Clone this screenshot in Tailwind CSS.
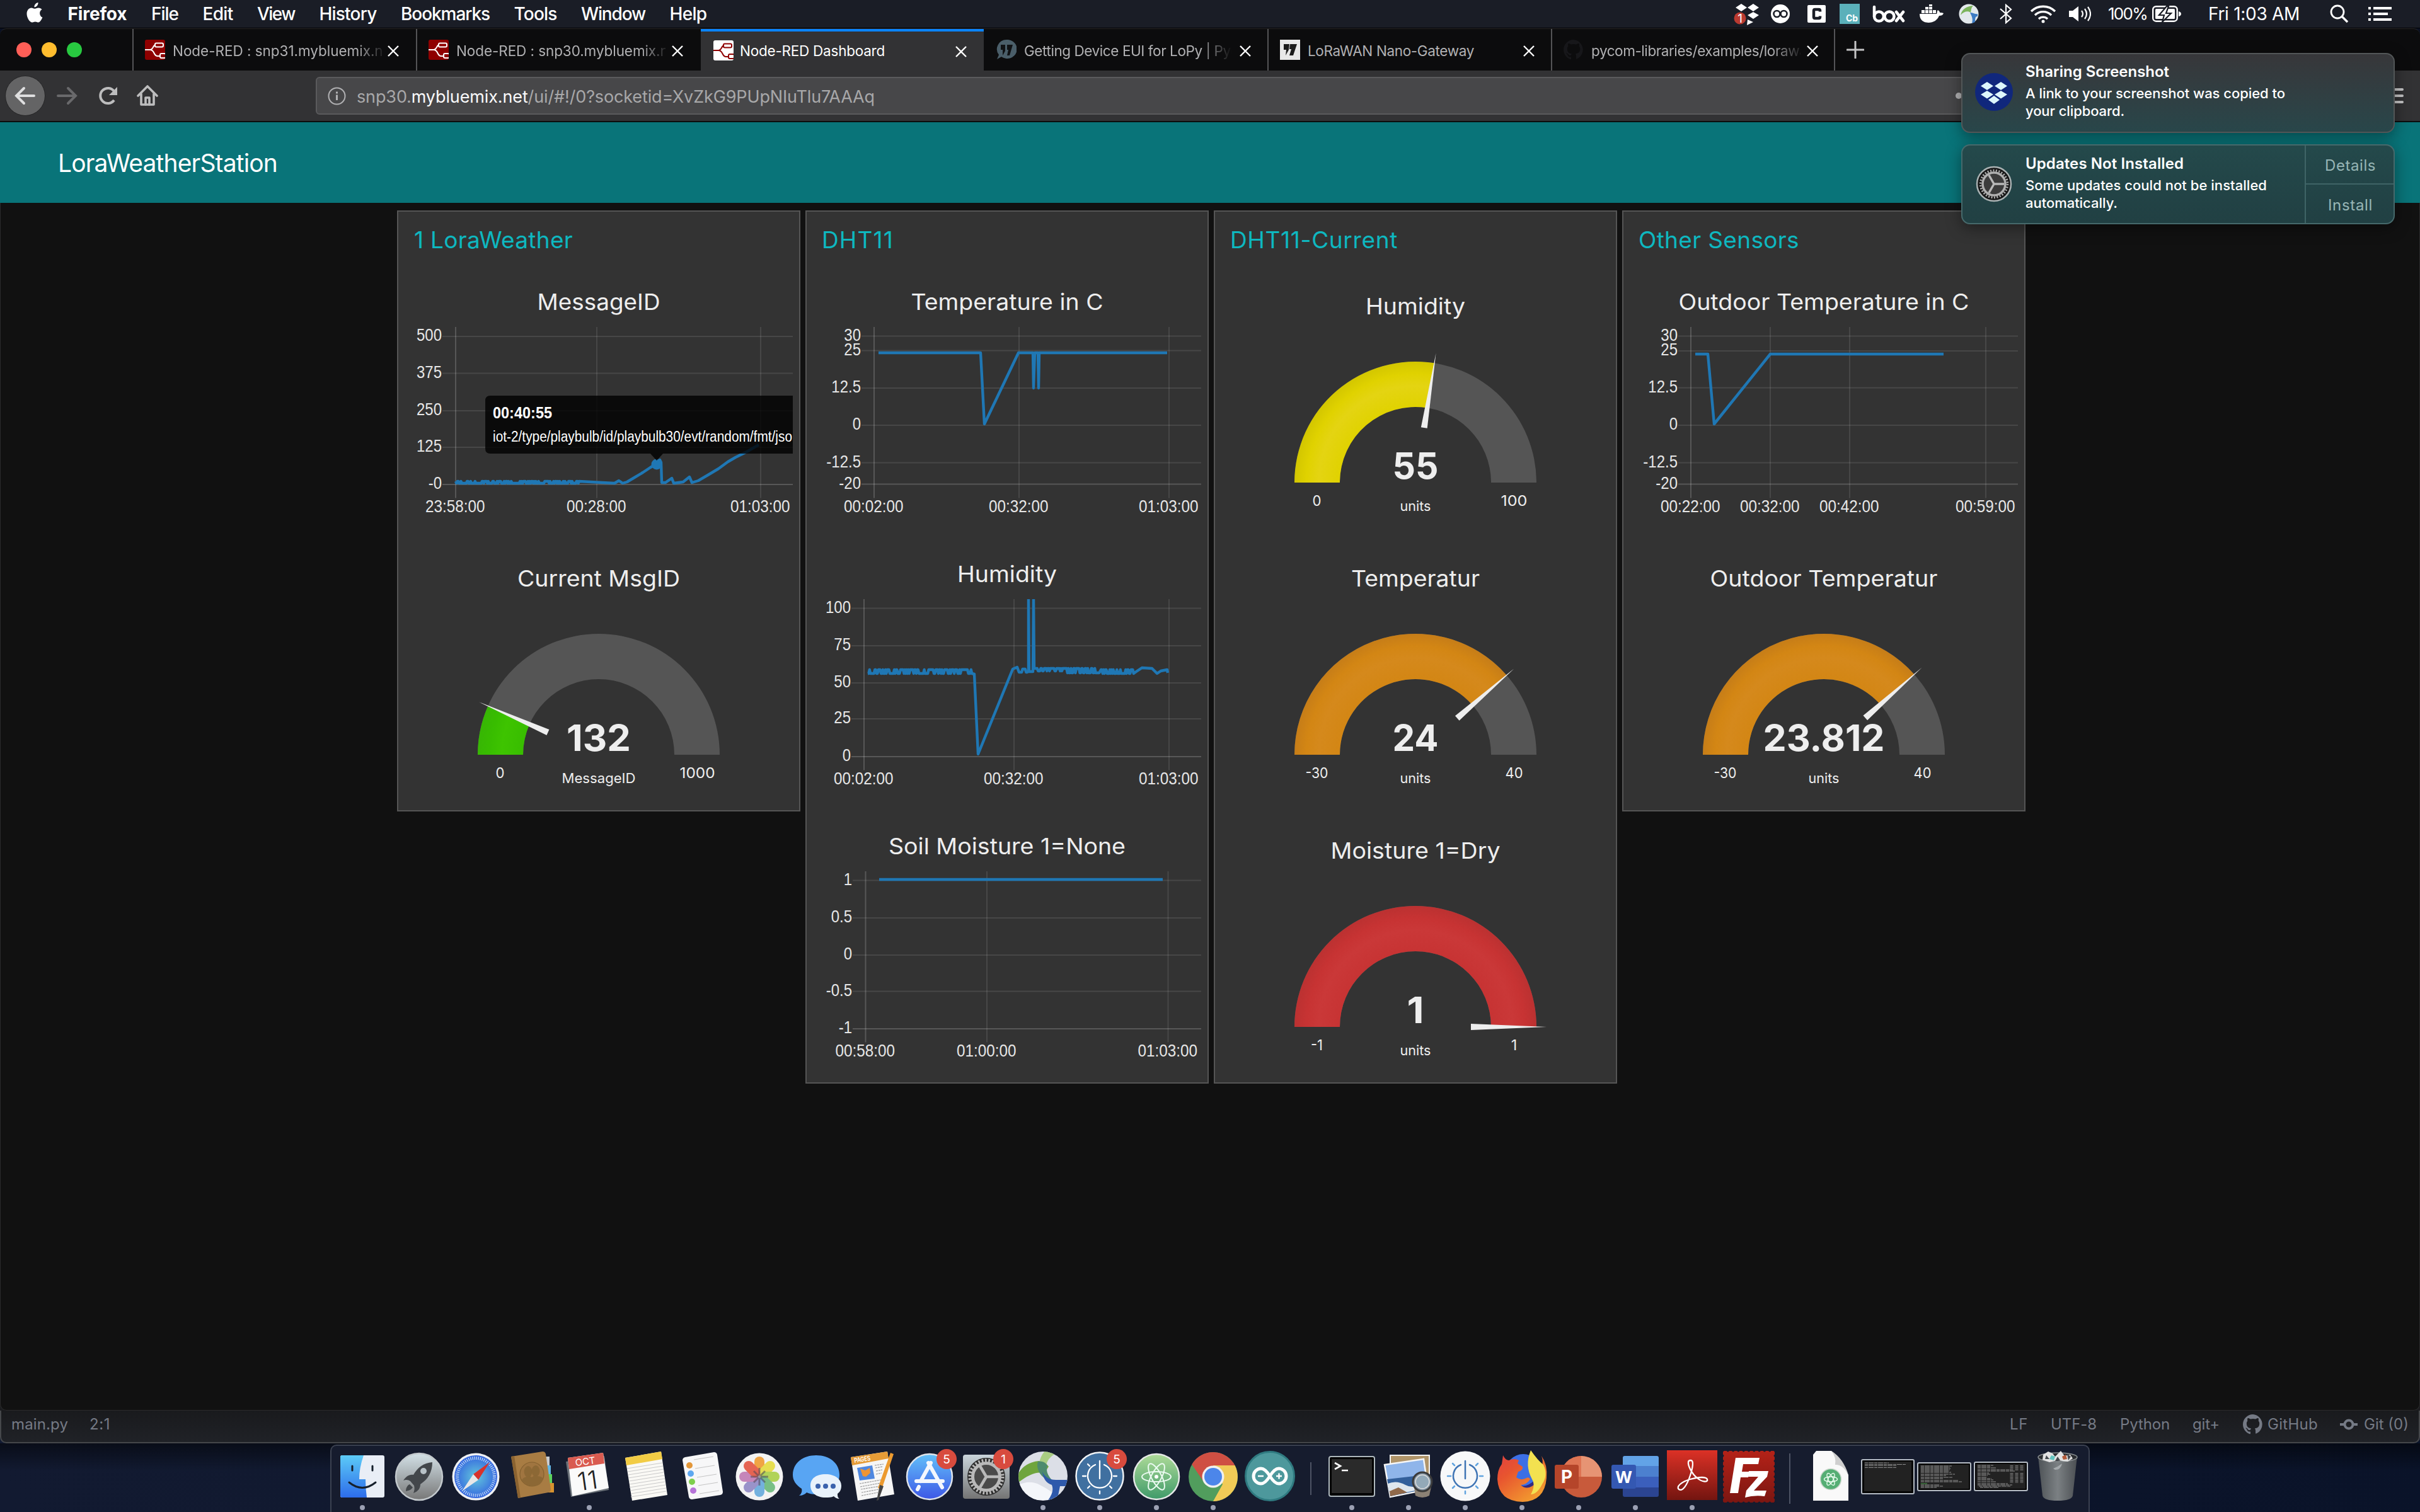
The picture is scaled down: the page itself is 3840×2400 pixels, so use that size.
<!DOCTYPE html>
<html lang="en">
<head>
<meta charset="utf-8">
<title>Node-RED Dashboard</title>
<script src="https://cdn.jsdelivr.net/npm/@tailwindcss/browser@4"></script>
</head>
<body class="w-[3840px] h-[2400px] overflow-hidden bg-[#0a1022] font-['Inter',sans-serif] text-white flex flex-col relative">

<!-- Shared icons -->
<svg class="hidden">
  <symbol id="close" viewBox="0 0 18 18"><path d="M1 1l16 16M17 1L1 17" stroke="#fff" stroke-width="2.400"/></symbol>
  <symbol id="flow" viewBox="0 0 32 32"><g fill="none" stroke="currentColor" stroke-width="2"><path d="M0 16h8c5 0 5-8 9-8M8 16c8 0 5 10 12 10h4"/><rect x="16" y="5.500" width="13" height="6" rx="2"/><rect x="24" y="22" width="9" height="7" rx="2"/></g></symbol>
  <symbol id="github" viewBox="0 0 16 16"><path fill="currentColor" d="M8 0C3.580 0 0 3.580 0 8c0 3.540 2.290 6.530 5.470 7.590.4.070.55-.17.55-.38v-1.500c-2 .4-2.500-.9-2.700-1.300-.1-.2-.5-.9-.8-1.100-.3-.2-.7-.5 0-.5.600 0 1.100.6 1.200.8.700 1.200 1.900.9 2.300.7.100-.5.300-.9.500-1.100-1.800-.2-3.600-.9-3.600-3.900 0-.9.300-1.600.8-2.200-.1-.2-.4-1 .1-2.100 0 0 .7-.2 2.200.8a7.600 7.600 0 0 1 4 0c1.500-1 2.200-.8 2.200-.8.400 1.100.2 1.900.1 2.100.5.600.8 1.300.8 2.200 0 3-1.900 3.700-3.700 3.900.3.300.6.700.6 1.500v2.200c0 .2.100.5.500.4A8 8 0 0 0 8 0z"/></symbol>
</svg>

<!-- Menu bar -->
<header class="h-[45px] shrink-0 bg-[#1a1d26] border-b border-black flex items-center justify-between text-[28px] whitespace-nowrap leading-none">
  <nav class="flex items-center gap-[38.5px] pl-[41px] font-medium">
    <svg class="w-[28px] h-[34px] -mt-1" viewBox="0 0 28 34" fill="#fff"><path d="M19.500 1c.2 2-.5 3.800-1.700 5.200-1.200 1.400-2.900 2.300-4.400 2.100-.2-1.900.6-3.700 1.700-4.900C16.300 2 18.100 1.100 19.500 1zM25.500 12c-3 1.800-3.900 5-3.100 7.900.6 2.300 2 3.800 4 4.700-1.300 3.400-3.900 7.900-6.500 8-1.900 0-2.600-1.200-5-1.200s-3.100 1.200-5 1.200C6.500 32.700 1.500 25.500 1.500 18.800 1.500 13 5.100 9.500 8.800 9.400c2.100 0 4 1.400 5.300 1.400 1.200 0 3.400-1.500 6.200-1.400 2.100.1 4 1 5.200 2.600z"/></svg>
    <span class="font-bold" data-w="94">Firefox</span>
    <span data-w="43">File</span><span data-w="48">Edit</span><span data-w="60">View</span><span data-w="91">History</span><span data-w="141">Bookmarks</span><span data-w="68">Tools</span><span data-w="102">Window</span><span data-w="59">Help</span>
  </nav>
  <div class="flex items-center pr-[45px]">
    <svg class="w-[42px] h-[36px]" viewBox="0 0 42 36" fill="#fff"><path d="M12 2l9 6-9 6-9-6zM31 2l9 6-9 6-9-6zM31 15l9 5-9 6-9-6zM22 27l9 4-10 5z"/><circle cx="10" cy="25" r="9.500" fill="#b93a30"/><text x="10" y="32" font-size="19" text-anchor="middle" fill="#fff">1</text></svg>
    <svg class="w-[30px] h-[30px] ml-[17px]" viewBox="0 0 30 30"><circle cx="15" cy="15" r="15" fill="#fff"/><g fill="none" stroke="#1a1d26" stroke-width="2.600"><circle cx="9.500" cy="15" r="5"/><circle cx="20.500" cy="15" r="5"/></g></svg>
    <svg class="w-[29px] h-[28px] ml-[28px]" viewBox="0 0 29 28"><rect width="29" height="28" rx="2" fill="#fff"/><path d="M20 10.500V9q0-2-2-2h-6q-2 0-2 2v10q0 2 2 2h6q2 0 2-2v-1.500" fill="none" stroke="#1a1d26" stroke-width="4.500"/></svg>
    <svg class="w-[32px] h-[32px] ml-[22px]" viewBox="0 0 32 32"><rect width="32" height="32" fill="#5bb0ba"/><text x="10" y="28" font-size="14" font-weight="700" fill="#fff">Cb</text></svg>
    <svg class="w-[52px] h-[30px] ml-[20px]" viewBox="0 0 52 30" fill="none" stroke="#fff" stroke-width="4.500" stroke-linecap="round"><path d="M3 4v15"/><circle cx="10.500" cy="19" r="7.500"/><circle cx="27" cy="19" r="7.500"/><path d="M38 12l11 14M49 12L38 26"/></svg>
    <svg class="w-[38px] h-[30px] ml-[23px]" viewBox="0 0 38 30" fill="#fff"><path d="M0 15h27c1-1 0-4 2-6 2 1 3 3 3 4 2 0 4 0 6 1-1 3-4 4-7 4-3 7-9 11-17 11S0 25 0 15z"/><g><path d="M3 9h5v5H3zM9 9h5v5H9zM15 9h5v5h-5zM21 9h5v5h-5zM9 4h5v4H9zM15 4h5v4h-5zM15 0h5v3h-5z"/></g></svg>
    <svg class="w-[32px] h-[32px] ml-[24px]" viewBox="0 0 32 32"><circle cx="16" cy="16" r="15.500" fill="#e3e9ec"/><path d="M3 18C5 9 12 4 23 3c-4 4-3 8-4 11-4-3-11-2-16 4z" fill="#7cb45c"/><path d="M18 14c5 0 7 3 12 2v4c-3 0-4 1-4 9l-5 2c2-7 0-11-3-17z" fill="#3d7cc4"/></svg>
    <svg class="w-[20px] h-[32px] ml-[33px]" viewBox="0 0 20 32" fill="none" stroke="#fff" stroke-width="2.200"><path d="M1 8l17 15-8 7V2l8 7L1 24"/></svg>
    <svg class="w-[42px] h-[30px] ml-[28px]" viewBox="0 0 42 30" fill="none" stroke="#fff" stroke-width="3.400"><path d="M2 11a27 27 0 0 1 38 0M8 17a18.500 18.500 0 0 1 26 0M14 23a10 10 0 0 1 14 0"/><circle cx="21" cy="27" r="2.500" fill="#fff" stroke="none"/></svg>
    <svg class="w-[35px] h-[28px] ml-[20px]" viewBox="0 0 35 28"><path d="M0 9h6l9-7v24l-9-7H0z" fill="#fff"/><path d="M20 9q4 5 0 10M25 6q6 8 0 16M30 3q8 11 0 22" fill="none" stroke="#fff" stroke-width="2.200"/></svg>
    <span class="ml-[27px] text-[26px]" data-w="62">100%</span>
    <svg class="w-[46px] h-[26px] ml-[8px]" viewBox="0 0 46 26"><rect x="1.200" y="1.200" width="38.500" height="23.500" rx="5" fill="none" stroke="#fff" stroke-width="2.400"/><rect x="5" y="5" width="31" height="16" rx="1.500" fill="#fff"/><path d="M23 1L11 15h8l-3 11 14-14h-8l4-11z" fill="#fff" stroke="#1a1d26" stroke-width="2.200"/><path d="M42 9v8q4-1 4-4t-4-4z" fill="#fff"/></svg>
    <span class="ml-[43px]" data-w="145">Fri 1:03 AM</span>
    <svg class="w-[30px] h-[30px] ml-[48px]" viewBox="0 0 30 30" fill="none" stroke="#fff" stroke-width="2.800"><circle cx="12" cy="12" r="10"/><path d="M19 19l9 9" stroke-width="3.400"/></svg>
    <svg class="w-[37px] h-[22px] ml-[31px]" viewBox="0 0 37 22" fill="#fff"><path d="M0 0h4v4H0zM8 0h29v4H8zM0 9h4v4H0zM8 9h23v4H8zM0 18h4v4H0zM8 18h29v4H8z"/></svg>
  </div>
</header>

<!-- Tab strip -->
<div class="h-[67px] shrink-0 bg-[#0c0c0d] border-t border-[#2a2a2c] rounded-t-[10px] flex text-[22.500px] text-[#b1b1b3] whitespace-nowrap leading-none">
  <div class="w-[210px] flex items-center gap-4 pl-[26px]">
    <i class="size-6 rounded-full bg-[#ff5f57]"></i><i class="size-6 rounded-full bg-[#ffbd2e]"></i><i class="size-6 rounded-full bg-[#28c940]"></i>
  </div>
  <div class="w-[450px] border-l-2 border-[#545456] flex items-center pl-[18px]">
    <svg class="size-8 shrink-0 bg-[#8f0000] text-white rounded-[3px]"><use href="#flow"/></svg>
    <div class="ml-3 mt-1 w-[332px] shrink-0 overflow-hidden py-1 [mask-image:linear-gradient(90deg,#000_88%,transparent_102%)]"><span data-w="354">Node-RED : snp31.mybluemix.net</span></div>
    <svg class="ml-[9px] size-[18px] mt-1"><use href="#close"/></svg>
  </div>
  <div class="w-[452px] border-l-2 border-[#545456] flex items-center pl-[18px]">
    <svg class="size-8 shrink-0 bg-[#8f0000] text-white rounded-[3px]"><use href="#flow"/></svg>
    <div class="ml-3 mt-1 w-[332px] shrink-0 overflow-hidden py-1 [mask-image:linear-gradient(90deg,#000_88%,transparent_102%)]"><span data-w="357">Node-RED : snp30.mybluemix.net</span></div>
    <svg class="ml-[10px] size-[18px] mt-1"><use href="#close"/></svg>
  </div>
  <div class="w-[449px] bg-[#323234] border-t-4 border-[#0a84ff] flex items-center pl-[20px] text-white pb-[3px]">
    <svg class="size-8 shrink-0 bg-white text-[#8f0000] rounded-[3px]"><use href="#flow"/></svg>
    <div class="ml-[10px] mt-1 w-[330px] shrink-0 py-1"><span data-w="230">Node-RED Dashboard</span></div>
    <svg class="ml-[12px] size-[18px] mt-1"><use href="#close"/></svg>
  </div>
  <div class="w-[450px] flex items-center pl-[20px]">
    <svg class="size-8 shrink-0" viewBox="0 0 32 32"><path d="M16 0a15.500 15 0 1 1-8 27l-7 4 3-7A15.500 15 0 0 1 16 0z" fill="#4a5e69"/><path d="M7 8h7v10l-4 7v-9H7zM17 8h9l-5 17h-4l2-9h-2z" fill="#101214"/></svg>
    <div class="ml-3 mt-1 w-[330px] shrink-0 overflow-hidden py-1 [mask-image:linear-gradient(90deg,#000_85%,transparent)]"><span data-w="372">Getting Device EUI for LoPy | Pycom</span></div>
    <svg class="ml-[12px] size-[18px] mt-1"><use href="#close"/></svg>
  </div>
  <div class="w-[450px] border-l-2 border-[#545456] flex items-center pl-[18px]">
    <svg class="size-8 shrink-0" viewBox="0 0 32 32"><path d="M0 0h32v32H0z" fill="#e8e8e8"/><path d="M6 7h9l-1 9-5 9 1-9H6zM16 7h11l-6 18h-6l3-10h-3z" fill="#1c1c1c"/></svg>
    <div class="ml-3 mt-1 w-[330px] shrink-0 py-1"><span data-w="264">LoRaWAN Nano-Gateway</span></div>
    <svg class="ml-[12px] size-[18px] mt-1"><use href="#close"/></svg>
  </div>
  <div class="w-[451px] border-l-2 border-r-2 border-[#545456] flex items-center pl-[18px]">
    <svg class="size-8 shrink-0 text-[#17171a]"><use href="#github"/></svg>
    <div class="ml-3 mt-1 w-[332px] shrink-0 overflow-hidden py-1 [mask-image:linear-gradient(90deg,#000_86%,transparent_102%)]"><span data-w="378">pycom-libraries/examples/lorawan-n</span></div>
    <svg class="ml-[10px] size-[18px] mt-1"><use href="#close"/></svg>
  </div>
  <div class="flex items-center pl-[18px]"><svg class="size-[28px]" viewBox="0 0 28 28" stroke="#c4c4c5" stroke-width="3" stroke-linecap="round"><path d="M14 1v26M1 14h26"/></svg></div>
</div>

<!-- Navigation toolbar -->
<div class="h-[82px] shrink-0 bg-[#323234] border-b-2 border-[#0c0c0d] flex items-center pl-[8px] pr-[26px] leading-none">
  <div class="size-16 rounded-full bg-[#646465] border border-[#252526] flex items-center justify-center"><svg class="w-[34px] h-[30px]" viewBox="0 0 34 30" fill="none" stroke="#dededf" stroke-width="4" stroke-linecap="round"><path d="M31 15H4M15 3L3 15l12 12"/></svg></div>
  <svg class="w-[34px] h-[30px] ml-[17px]" viewBox="0 0 34 30" fill="none" stroke="#69696b" stroke-width="4" stroke-linecap="round"><path d="M3 15h27M19 3l12 12-12 12"/></svg>
  <svg class="size-[32px] ml-[32px]" viewBox="0 0 32 32"><path d="M26 23A12 12 0 1 1 26 9" fill="none" stroke="#bdbdbe" stroke-width="4"/><path d="M31 2v13H18z" fill="#bdbdbe"/></svg>
  <svg class="w-[34px] h-[34px] ml-[30px]" viewBox="0 0 34 34" fill="none" stroke="#bdbdbe" stroke-width="3.600" stroke-linejoin="round" stroke-linecap="round"><path d="M2 17L17 2l15 15M7 14v17h20V14"/><path d="M14 31V20h6v11" /></svg>
  <div class="ml-[250px] flex-1 h-[60px] bg-[#474749] border-2 border-[#5a5a5c] rounded-[6px] flex items-center pl-[17px] text-[27px] text-[#a8a8a9] whitespace-nowrap">
    <svg class="size-[29px]" viewBox="0 0 29 29" fill="none" stroke="#b1b1b3" stroke-width="2"><circle cx="14.500" cy="14.500" r="13"/><path d="M14.500 12.500V21M14.500 7.500v3" stroke-width="3"/></svg>
    <span class="ml-[17px] pt-[2px]" data-w="822">snp30.<b class="font-normal text-[#f9f9fa]">mybluemix.net</b>/ui/#!/0?socketid=XvZkG9PUpNIuTlu7AAAq</span>
    <i class="ml-[1715px] size-[10px] shrink-0 rounded-full bg-[#b1b1b3]"></i>
  </div>
  <svg class="ml-[20px] w-[36px] h-[24px]" viewBox="0 0 36 24" stroke="#c4c4c5" stroke-width="4" stroke-linecap="round"><path d="M2 2h32M2 12h32M2 22h32"/></svg>
</div>

<!-- Dashboard -->
<div class="h-[128px] shrink-0 bg-[#097479] flex items-center px-[92px] text-[39px] leading-none whitespace-nowrap"><span data-w="348">LoraWeatherStation</span></div>
<div class="flex-1 flex bg-[#1b1c1f]">
<main class="flex-1 bg-[#111] flex items-start justify-center gap-2 pt-3 border-b border-x border-[#2b2b2c] rounded-b-[10px] whitespace-nowrap">
  <section class="w-[640px] bg-[#333] border-2 border-[#555] pb-1 ml-1">
    <h2 class="h-[82px] pl-[25px] pt-[6px] flex items-center text-[37px] text-[#0eb8c0] leading-none"><span data-w="252">1 LoraWeather</span></h2>
    <div data-chart="messageId"></div><div data-gauge="messageId"></div>
  </section>
  <section class="w-[640px] bg-[#333] border-2 border-[#555] pb-1">
    <h2 class="h-[82px] pl-[24px] pt-[6px] flex items-center text-[37px] text-[#0eb8c0] leading-none"><span data-w="114">DHT11</span></h2>
    <div data-chart="temperature"></div><div data-chart="humidity"></div><div data-chart="soil"></div>
  </section>
  <section class="w-[640px] bg-[#333] border-2 border-[#555] pb-1">
    <h2 class="h-[82px] pl-[24px] pt-[6px] flex items-center text-[37px] text-[#0eb8c0] leading-none"><span data-w="266">DHT11-Current</span></h2>
    <div data-gauge="humidity"></div><div data-gauge="temperature"></div><div data-gauge="moisture"></div>
  </section>
  <section class="w-[640px] bg-[#333] border-2 border-[#555] pb-1">
    <h2 class="h-[82px] pl-[24px] pt-[6px] flex items-center text-[37px] text-[#0eb8c0] leading-none"><span data-w="255">Other Sensors</span></h2>
    <div data-chart="outdoor"></div><div data-gauge="outdoor"></div>
  </section>
</main>
</div>

<!-- Editor status bar and dock, over the desktop wallpaper -->
<div class="shrink-0 bg-linear-to-r from-[#121a31] via-[#0e172d] to-[#0a1329]">
<div class="h-[52px] bg-linear-to-b from-[#191a1d] to-[#202227] border-b-2 border-x-2 border-[#45474a] rounded-b-[10px] flex items-center pb-[6px] pl-[16px] pr-[16px] text-[24px] text-[#757a85] leading-none whitespace-nowrap">
  <span data-w="90">main.py</span><span class="ml-[34px]" data-w="33">2:1</span>
  <div class="ml-auto flex items-center">
    <span data-w="29">LF</span><span class="ml-[36px]" data-w="73">UTF-8</span><span class="ml-[37px]" data-w="79">Python</span><span class="ml-[36px]" data-w="43">git+</span>
    <svg class="ml-[37px] size-[32px]"><use href="#github"/></svg>
    <span class="ml-[7px]" data-w="80">GitHub</span>
    <svg class="ml-[35px] w-[28px] h-[18px]" viewBox="0 0 28 18" fill="none" stroke="#757a85" stroke-width="4"><circle cx="14" cy="9" r="6.500"/><path d="M0 9h7M21 9h7"/></svg>
    <span class="ml-[10px]" data-w="71">Git (0)</span>
  </div>
</div>
<footer class="h-[109px] flex justify-center pt-[2px] bg-linear-to-b from-black/50 to-transparent to-40%">
  <div class="w-[2792px] h-full bg-[#161c2e] border-2 border-b-0 border-[#3b4150] rounded-t-[10px] flex pl-[4px]">
    <svg class="w-[90px] h-[105px] shrink-0" viewBox="0 0 90 105"><defs><linearGradient id="fb" x2="0" y2="1"><stop stop-color="#5ccbf7"/><stop offset="1" stop-color="#2d6cea"/></linearGradient></defs><rect x="10" y="15" width="70" height="67" rx="3" fill="#e9eef6"/><path d="M13 15h34q-7 20-7 38h10q0 15 2 29H13q-3 0-3-3V18q0-3 3-3z" fill="url(#fb)"/><path d="M29 32v7M61 32v7M24 58q21 17 42 0" fill="none" stroke="#16202c" stroke-width="3" stroke-linecap="round"/><circle cx="45" cy="98" r="4" fill="#9ba0b3"/></svg>
    <svg class="w-[90px] h-[105px] shrink-0" viewBox="0 0 90 105"><defs><linearGradient id="lp" x2="0" y2="1"><stop stop-color="#d3e1e7"/><stop offset="1" stop-color="#777"/></linearGradient></defs><circle cx="45" cy="49" r="37" fill="url(#lp)" stroke="#c3c9cd" stroke-width="2.500"/><path d="M66 26c-14 1-24 9-30 20-7-1-12 3-16 9 5-2 8-1 11 1l6 7c1 4 1 7-1 12 8-3 11-8 11-14 12-8 19-19 19-35z" fill="#43474b"/><circle cx="52" cy="40" r="5" fill="#b8c2c7"/><path d="M30 61c-4 2-6 6-6 11 6-1 9-3 11-6" fill="#43474b"/></svg>
    <svg class="w-[90px] h-[105px] shrink-0" viewBox="0 0 90 105"><defs><radialGradient id="sf"><stop stop-color="#63c7dc"/><stop offset="1" stop-color="#3567df"/></radialGradient></defs><circle cx="45" cy="49" r="37.500" fill="#eef0f3"/><circle cx="45" cy="49" r="34" fill="url(#sf)"/><circle cx="45" cy="49" r="29.500" fill="none" stroke="#cfe3fa" stroke-width="5" stroke-dasharray="1.100 2"/><path d="M67 26L49 54l-8-9z" fill="#d8322b"/><path d="M23 72l18-27 8 9z" fill="#e8e8e8"/></svg>
    <svg class="w-[90px] h-[105px] shrink-0" viewBox="0 0 90 105"><path d="M66 17h6v14h-6z" fill="#c9ccd0"/><path d="M66 31h8v14h-8z" fill="#62b7e6"/><path d="M68 45h8v14h-8z" fill="#5dd35e"/><path d="M70 59h9v15h-9z" fill="#d7922f"/><path d="M11 17l50-8q4 0 5 4l8 56q0 4-4 5l-48 9z" fill="#a87c43"/><path d="M11 17l5-1 10 66-4 1z" fill="#8a6230"/><ellipse cx="44" cy="45" rx="19" ry="19" fill="#a07540" stroke="#83602f" stroke-width="1.200"/><g fill="#8c6835"><ellipse cx="38" cy="41" rx="6.500" ry="9"/><ellipse cx="50" cy="40" rx="6.500" ry="9"/><path d="M28 54q3-5 10-5 3-2 6 1 3-4 8-2 7 0 10 4-3 11-14 12-14 0-20-10z"/></g></svg>
    <svg class="w-[90px] h-[105px] shrink-0" viewBox="0 0 90 105"><path d="M8 25l8 56 60-11-7-54z" fill="#6a7178"/><path d="M11 19l56-8 9 56-58 13z" fill="#fafafa"/><path d="M11 19l56-8 2 17-56 9z" fill="#d95b50"/><text transform="rotate(-8 40 28)" x="39" y="30" font-size="15" text-anchor="middle" fill="#fff">OCT</text><text transform="rotate(-8 45 60)" x="43" y="69" font-size="40" font-weight="300" text-anchor="middle" fill="#222" textLength="32">11</text><circle cx="45" cy="98" r="4" fill="#9ba0b3"/></svg>
    <svg class="w-[90px] h-[105px] shrink-0" viewBox="0 0 90 105"><path d="M12 19l57-10 10 69-56 9z" fill="#faf9f5"/><path d="M12 19l57-10 2 12-57 10z" fill="#f2cc45"/><g stroke="#c9c9c9" stroke-width="1"><path d="M15 36l56-9M16 41l56-9M17 46l56-9M17 51l56-9M18 56l56-9M19 61l56-9M19 66l56-9M20 71l56-9M21 76l56-9M21 81l56-9"/></g></svg>
    <svg class="w-[90px] h-[105px] shrink-0" viewBox="0 0 90 105"><path d="M17 18l46-8q4 0 5 4l9 59q0 4-4 5l-45 7q-4 0-5-4l-10-58q0-4 4-5z" fill="#f7f7f8"/><g stroke="#c4c4c4"><path d="M31 22l31-5M33 36l31-5M36 50l31-5M38 63l31-5M40 76l31-5"/></g><circle cx="24" cy="31" r="5" fill="#e3973a"/><circle cx="26" cy="44" r="5" fill="#5ea8f0"/><circle cx="28" cy="57" r="5" fill="#7ecf4d"/><circle cx="30" cy="71" r="5" fill="#b673d8"/></svg>
    <svg class="w-[90px] h-[105px] shrink-0" viewBox="0 0 90 105"><circle cx="45" cy="49" r="37.500" fill="#f3f3f3"/><g transform="translate(45 49)" opacity=".88"><rect x="-8" y="-32" width="16" height="30" rx="8" fill="#f09a2c"/><rect x="-8" y="-32" width="16" height="30" rx="8" fill="#e5dc3b" transform="rotate(45)"/><rect x="-8" y="-32" width="16" height="30" rx="8" fill="#a9cf44" transform="rotate(90)"/><rect x="-8" y="-32" width="16" height="30" rx="8" fill="#68b878" transform="rotate(135)"/><rect x="-8" y="-32" width="16" height="30" rx="8" fill="#62a8dc" transform="rotate(180)"/><rect x="-8" y="-32" width="16" height="30" rx="8" fill="#8d86c4" transform="rotate(225)"/><rect x="-8" y="-32" width="16" height="30" rx="8" fill="#bf78b3" transform="rotate(270)"/><rect x="-8" y="-32" width="16" height="30" rx="8" fill="#e4513d" transform="rotate(315)"/><g stroke="#3a3040" stroke-width="3" opacity=".55"><path d="M0-14V14M-14 0H14M-9-9L9 9M9-9L-9 9"/></g></g></svg>
    <svg class="w-[90px] h-[105px] shrink-0" viewBox="0 0 90 105"><path d="M45 15c22 0 37 13 37 31S67 77 45 77c-6 0-11-1-15-3-4 4-8 5-12 5 4-3 5-7 4-11C13 62 8 55 8 46c0-18 15-31 37-31z" fill="#58a5f3"/><path d="M60 45c15 0 25 8 25 18 0 6-2 10-6 13 0 3 0 6 3 8-4 0-7-2-9-4-4 2-8 2-13 2-15 0-24-8-24-19s9-18 24-18z" fill="#e9f2fb"/><g fill="#3b62ad"><circle cx="48" cy="64" r="4"/><circle cx="60" cy="64" r="4"/><circle cx="72" cy="64" r="4"/></g></svg>
    <svg class="w-[90px] h-[105px] shrink-0" viewBox="0 0 90 105"><path d="M10 18l58-9 11 68-58 10z" fill="#f6f6f6"/><path d="M10 18l58-9 2 11-58 11z" fill="#e69c37"/><text x="16" y="27" font-size="10.500" font-weight="600" fill="#fff" transform="rotate(-9 16 27)" textLength="26" lengthAdjust="spacingAndGlyphs">PAGES</text><path d="M20 35l24-4 4 21-24 3z" fill="#4e87e0"/><path d="M25 36l8 3 7-4 1 8-7 6-5-1z" fill="#ef9535"/><g stroke="#9a9a9a" stroke-width="1.200" stroke-dasharray="3 1"><path d="M48 31l14-2M49 35l12-2M50 40l10-2M50 45l9-2M24 60l34-6M25 65l32-6M26 69l30-5M27 74l28-5M27 79l26-5"/></g><path d="M73 11l5 2-19 56-6-2z" fill="#ec9a2f"/><path d="M56 62l6 2-8 22-3 1z" fill="#444"/></svg>
    <svg class="w-[90px] h-[105px] shrink-0" viewBox="0 0 90 105"><defs><linearGradient id="as" x2="0" y2="1"><stop stop-color="#62c0fa"/><stop offset="1" stop-color="#3d57e6"/></linearGradient></defs><circle cx="45" cy="49" r="36" fill="url(#as)" stroke="#e0e4ea" stroke-width="2.500"/><path d="M43 27l22 39M47 27L31 56M28 65l-2 4M24 56h42" stroke="#f4f7fd" stroke-width="6" stroke-linecap="round"/><circle cx="72" cy="21" r="16" fill="#d84b3e"/><text x="72" y="28" font-size="19" text-anchor="middle" fill="#fff">5</text></svg>
    <svg class="w-[90px] h-[105px] shrink-0" viewBox="0 0 90 105"><defs><linearGradient id="sp" x2="0" y2="1"><stop stop-color="#c9d4db"/><stop offset="1" stop-color="#747474"/></linearGradient></defs><rect x="8" y="14" width="74" height="70" rx="4" fill="url(#sp)"/><circle cx="45" cy="49" r="30" fill="#2e2e2e"/><circle cx="45" cy="49" r="26" fill="none" stroke="#b9b9b9" stroke-width="5" stroke-dasharray="2.700 2.740"/><circle cx="45" cy="49" r="21.500" fill="#4a4a4a" stroke="#b9b9b9" stroke-width="5"/><path d="M45 49h20M45 49L35 32M45 49L35 66" stroke="#b9b9b9" stroke-width="4.500"/><circle cx="72" cy="21" r="16" fill="#d84b3e"/><text x="72" y="28" font-size="19" text-anchor="middle" fill="#fff">1</text></svg>
    <svg class="w-[90px] h-[105px] shrink-0" viewBox="0 0 90 105"><clipPath id="gc"><circle cx="45" cy="48" r="39"/></clipPath><g clip-path="url(#gc)"><path d="M0 0h90v105H0z" fill="#dcdfe7"/><path d="M0 66q20-14 40-4t34 24H0z" fill="#f4f6fa"/><path d="M3 50Q12 27 38 24q10 0 16 9-4 4-4 12Q34 36 6 58z" fill="#6fa53d"/><path d="M52 5l13 7q-14 8-15 20l-11-5Q42 12 52 5z" fill="#a9cd82"/><path d="M37 25q9-2 15 6-4 12 8 24-18-2-23-18-2-6 0-12z" fill="#4d8b6e"/><path d="M44 41q6 14 24 13h18v10H72q-2 12-6 26H50q14-16 9-28-13-4-15-21z" fill="#2e59ab"/></g><circle cx="45" cy="98" r="4" fill="#9ba0b3"/></svg>
    <svg class="w-[90px] h-[105px] shrink-0" viewBox="0 0 90 105"><circle cx="45" cy="48" r="37.500" fill="#4070a0" stroke="#f0f3f6" stroke-width="2.500"/><g fill="none" stroke="#fff" stroke-width="2.300" stroke-linecap="round"><path d="M38 30a19 19 0 1 0 14 0M45 24v28M18 48h5M67 48h5M45 72v4M26 67l3-3M64 67l-3-3M26 29l3 3"/></g><circle cx="72" cy="21" r="16" fill="#d84b3e"/><text x="72" y="28" font-size="19" text-anchor="middle" fill="#fff">5</text><circle cx="45" cy="98" r="4" fill="#9ba0b3"/></svg>
    <svg class="w-[90px] h-[105px] shrink-0" viewBox="0 0 90 105"><defs><linearGradient id="at" x2="0" y2="1"><stop stop-color="#aedb98"/><stop offset="1" stop-color="#3f9a69"/></linearGradient></defs><circle cx="45" cy="49" r="36" fill="url(#at)" stroke="#e6e9e7" stroke-width="2.500"/><g fill="none" stroke="#eafaf0" stroke-width="2" transform="translate(45 49)"><ellipse rx="23" ry="8"/><ellipse rx="23" ry="8" transform="rotate(62)"/><ellipse rx="23" ry="8" transform="rotate(118)"/></g><circle cx="45" cy="49" r="3" fill="#fff"/><circle cx="45" cy="98" r="4" fill="#9ba0b3"/></svg>
    <svg class="w-[90px] h-[105px] shrink-0" viewBox="0 0 90 105"><circle cx="45" cy="49" r="39" fill="#519d5d"/><path d="M45 49L11.200 29.500A39 39 0 0 1 79.500 31z" fill="#cf4f43"/><path d="M11.200 29.500L32 60l13-11V30z" fill="#cf4f43"/><path d="M45 31h34.500A39 39 0 0 1 45 88l15-27z" fill="#f1cb57"/><circle cx="45" cy="49" r="17.500" fill="#f0f0f0"/><circle cx="45" cy="49" r="14" fill="#4c86ea"/><circle cx="45" cy="98" r="4" fill="#9ba0b3"/></svg>
    <svg class="w-[90px] h-[105px] shrink-0" viewBox="0 0 90 105"><circle cx="45" cy="48" r="38.500" fill="#4d989c" stroke="#2f7a80" stroke-width="3"/><g fill="none" stroke="#fff" stroke-width="5"><path d="M45 48c-5-8-9-12-14-12a12 12 0 0 0 0 24c5 0 9-4 14-12s9-12 14-12a12 12 0 0 1 0 24c-5 0-9-4-14-12z"/><path d="M26 48h9M55 48h9M59.500 43.500v9" stroke-width="2.400"/></g></svg>
    <div class="w-[40px] shrink-0 flex justify-center pt-[26px]"><i class="w-[2px] h-[52px] bg-[#4d5364]"></i></div>
    <svg class="w-[90px] h-[105px] shrink-0" viewBox="0 0 90 105"><rect x="9" y="17" width="72" height="63" rx="3" fill="#000" stroke="#aeb8bd" stroke-width="2"/><rect x="13" y="21" width="64" height="54" fill="#2a2a2a"/><path d="M18 27l9 5-9 5M29 39h10" fill="none" stroke="#fff" stroke-width="2.600"/><circle cx="45" cy="98" r="4" fill="#9ba0b3"/></svg>
    <svg class="w-[90px] h-[105px] shrink-0" viewBox="0 0 90 105"><path d="M16 15h62v52H16z" fill="#b0956a" stroke="#f3f3f3" stroke-width="2"/><path d="M7 30l62-9 7 48-60 12z" fill="#8fb5ea" stroke="#f6f6f6" stroke-width="2.500"/><path d="M11 53l61-7 3 22-59 12z" fill="#33609b"/><path d="M12 60q14-6 28 2t34-5l1 10-59 12z" fill="#dfe7ee"/><path d="M15 72l14-6 14 8-27 6z" fill="#90694a"/><path d="M53 60l3 19q11 6 22 0l4-19z" fill="#8b8175"/><circle cx="67" cy="57" r="15" fill="#7f91a0" stroke="#3a3a3a" stroke-width="3"/><circle cx="67" cy="57" r="11" fill="#93a9b8" stroke="#ddd" stroke-width="1.500"/><circle cx="45" cy="98" r="4" fill="#9ba0b3"/></svg>
    <svg class="w-[90px] h-[105px] shrink-0" viewBox="0 0 90 105"><circle cx="45" cy="48" r="39.500" fill="#f7f8f9"/><g fill="none" stroke="#3f74b4" stroke-width="2.500" stroke-linecap="round"><path d="M38 30a19 19 0 1 0 14 0M45 24v28"/><path stroke="#61a4df" d="M17 48h5M68 48h5M45 72v4M25 67l3-3M65 67l-3-3M25 28l3 3M65 28l-3 3"/></g><circle cx="45" cy="98" r="4" fill="#9ba0b3"/></svg>
    <svg class="w-[90px] h-[105px] shrink-0" viewBox="0 0 90 105"><defs><linearGradient id="ff" x2=".8" y2="1"><stop stop-color="#e2413f"/><stop offset=".35" stop-color="#e8552f"/><stop offset="1" stop-color="#f3a32f"/></linearGradient></defs><circle cx="47" cy="41" r="28" fill="#3c6fe6"/><path d="M36 56q10 16 30-2l-2 14H36z" fill="#322a80"/><path d="M15 15q3 7 9 8 9-4 16 0l-2 5 8 5q1 6-7 8l-3 9q6 5 14 2 6-4 8 1-6 9-15 9 8 8 18 2 10-6 7-18 14-14 8-30 10 14 8 35-3 37-38 38Q8 88 6 53q0-15 7-24z" fill="url(#ff)"/><path d="M59 7q11 16 20 23 8 16-2 31-8 16-18 16 8-14 2-24-12-22-2-46z" fill="#f3e150"/><circle cx="45" cy="98" r="4" fill="#9ba0b3"/></svg>
    <svg class="w-[90px] h-[105px] shrink-0" viewBox="0 0 90 105"><circle cx="49" cy="49" r="33" fill="#c85a3b"/><path d="M49 16a33 33 0 0 1 33 33H49z" fill="#e69474"/><path d="M49 16v33H16a33 33 0 0 1 33-33z" fill="#de7453"/><rect x="7" y="30" width="38" height="38" rx="3" fill="#b5452a"/><text x="26" y="59" font-size="28" font-weight="700" text-anchor="middle" fill="#fff">P</text><circle cx="45" cy="98" r="4" fill="#9ba0b3"/></svg>
    <svg class="w-[90px] h-[105px] shrink-0" viewBox="0 0 90 105"><path d="M25 32V19q0-3 3-3h51q3 0 3 3v13z" fill="#62a3e7"/><path d="M25 32h57v17H25z" fill="#4c80cf"/><path d="M25 49h57v17H25z" fill="#3b5fbc"/><path d="M25 66h57v12q0 3-3 3H28q-3 0-3-3z" fill="#2b4491"/><rect x="7" y="30" width="39" height="38" rx="3" fill="#3458b2"/><text x="26.500" y="59" font-size="26" font-weight="700" text-anchor="middle" fill="#fff" textLength="27" lengthAdjust="spacingAndGlyphs">W</text><circle cx="45" cy="98" r="4" fill="#9ba0b3"/></svg>
    <svg class="w-[90px] h-[105px] shrink-0" viewBox="0 0 90 105"><defs><linearGradient id="ac" x2="0" y2="1"><stop stop-color="#dc3126"/><stop offset="1" stop-color="#731510"/></linearGradient></defs><path d="M5 7h80v79H5z" fill="url(#ac)"/><path d="M43 23c5 0 3 12-1 24-5 15-12 26-18 22-5-4 4-12 18-16 15-4 25-4 27 0 2 5-8 5-16-2-8-6-15-20-14-25 0-2 2-3 4-3z" fill="none" stroke="#fff" stroke-width="2.300"/><circle cx="45" cy="98" r="4" fill="#9ba0b3"/></svg>
    <svg class="w-[90px] h-[105px] shrink-0" viewBox="0 0 90 105"><defs><linearGradient id="fz" x2="0" y2="1"><stop stop-color="#b42218"/><stop offset="1" stop-color="#7c1611"/></linearGradient></defs><rect x="4" y="8" width="82" height="82" fill="url(#fz)"/><rect x="3.500" y="7.500" width="83" height="83" fill="none" stroke="#161c2e" stroke-width="4" stroke-linecap="round" stroke-dasharray="0 8.300"/><path d="M24 19h38l-2 10H36l-2 12h12l-2 9H32l-4 25H15z" fill="#fff"/><path d="M45 40h31l-2 9-21 22h20l-3 9q-17-2-31 2l2-11 19-22H44z" fill="#fff"/></svg>
    <div class="w-[40px] shrink-0 flex justify-center pt-[12px]"><i class="w-[2px] h-[80px] bg-[#4d5364]"></i></div>
    <svg class="w-[90px] h-[105px] shrink-0" viewBox="0 0 90 105"><path d="M22 8h24q14 12 27 38v41H17V14z" fill="#f9f9f9"/><path d="M46 8q8 10 6 22 12-1 21 16-8-26-27-38z" fill="#cfcfcf"/><circle cx="45" cy="53" r="16.500" fill="#55ae74" stroke="#cdd8cf" stroke-width="1.500"/><g fill="none" stroke="#f0fff4" stroke-width="1.300" transform="translate(45 53)"><ellipse rx="10.500" ry="4"/><ellipse rx="10.500" ry="4" transform="rotate(62)"/><ellipse rx="10.500" ry="4" transform="rotate(118)"/></g></svg>
    <svg class="w-[90px] h-[105px] shrink-0" viewBox="0 0 90 105"><rect x="4" y="22" width="83" height="54" rx="2" fill="#050505" stroke="#b4bbc4" stroke-width="2"/><rect x="8" y="25" width="75" height="47" fill="#222"/><g stroke="#8a8a8a" stroke-width="1" stroke-dasharray="5 1 8 1"><path d="M9 27h38M9 29.500h65M9 31.500h50M9 34.500h50"/></g></svg>
    <svg class="w-[90px] h-[105px] shrink-0" viewBox="0 0 90 105"><rect x="3" y="27" width="84" height="44" rx="2" fill="#050505" stroke="#b4bbc4" stroke-width="2"/><rect x="6" y="30" width="78" height="38" fill="#222"/><g stroke="#8f8f8f" stroke-width="1" stroke-dasharray="5 1 8 1"><path d="M8 32h49M8 34h46M8 36h47M8 38h46M8 40h44M8 42h48M8 45h54M8 47h40M8 50h50M8 52h35M8 55h60M8 57h65M8 62h30M8 64h35M8 66h25"/></g><path d="M8 60h10" stroke="#4ca54c"/></svg>
    <svg class="w-[90px] h-[105px] shrink-0" viewBox="0 0 90 105"><rect x="3" y="26" width="84" height="45" rx="2" fill="#050505" stroke="#b4bbc4" stroke-width="2"/><rect x="6" y="29" width="78" height="39" fill="#222"/><g stroke="#8f8f8f" stroke-width="1" stroke-dasharray="5 1 8 1"><path d="M8 31h25M8 33h20M8 35h30M8 38h52M8 40h60M8 43h18M8 45h20M8 47h16M8 50h14M8 52h22M8 54h25M8 57h30M8 60h48M8 62h55M10 64h50M12 66h30"/></g><path d="M62 31v8M70 31v8M78 31v8M62 43v16M70 43v16M78 43v16" stroke="#777" stroke-width="5" stroke-dasharray="1.200 1"/></svg>
    <svg class="w-[90px] h-[105px] shrink-0" viewBox="0 0 90 105"><defs><linearGradient id="tr"><stop stop-color="#4e5357"/><stop offset=".5" stop-color="#7b8083"/><stop offset="1" stop-color="#4b4f53"/></linearGradient></defs><path d="M14 16l7 63q2 8 24 8t24-8l7-63z" fill="url(#tr)"/><ellipse cx="45" cy="18" rx="31" ry="7" fill="#2b2e31" stroke="#8b9093" stroke-width="1.500"/><path d="M22 14l8-5 7 3 4 5 9-9 6 8 9-2 4 6-8 5-17-2-12 3-11-4z" fill="#e2e2e2"/><path d="M35 15l6 2-2 6-7-2z" fill="#63c5c0"/><path d="M52 17l6-3 2 7-6 1z" fill="#b25b3b"/><path d="M60 13l6 4-4 6zM27 15l5 6h-7zM45 17l4 6-8 1z" fill="#45494e"/><path d="M38 36q8-3 14-8-2 10-11 10z" fill="#a5aaad"/></svg>
  </div>
</footer>
</div>

<!-- Notifications -->
<aside class="absolute top-[84px] left-[3112px] w-[688px] flex flex-col gap-[18px] whitespace-nowrap text-[22px] font-medium">
  <div class="h-[127px] rounded-[14px] border-2 border-[#525657] bg-gradient-to-b from-[#37373a] to-[#28464a] shadow-[0_6px_24px_rgba(0,0,0,0.4)] flex">
    <svg class="w-[60px] h-[60px] shrink-0 ml-[20px] mt-[30px]" viewBox="0 0 60 60"><circle cx="30" cy="30" r="30" fill="#10277c"/><path d="M19 14l10 6.500L19 27 9 20.500zM41 14l10 6.500L41 27l-10-6.500zM19 28l10 6-10 6.500L9 34zM41 28l10 6-10 6.500L31 34zM30 36l9 6.500-9 6.500-9-6.500z" fill="#ddf6fc"/></svg>
    <div class="ml-[20px] pt-[11px] leading-7"><p class="text-[24px] leading-[34px] mb-[3px] font-semibold"><span data-w="228">Sharing Screenshot</span></p><p><span data-w="412">A link to your screenshot was copied to</span></p><p><span data-w="157">your clipboard.</span></p></div>
  </div>
  <div class="h-[127px] rounded-[14px] border-2 border-[#46696b] bg-gradient-to-b from-[#24494b] to-[#214043] shadow-[0_6px_24px_rgba(0,0,0,0.4)] flex">
    <svg class="w-[60px] h-[60px] shrink-0 ml-[20px] mt-[31px]" viewBox="0 0 60 60"><circle cx="30" cy="30" r="27" fill="#161616" stroke="#a9b1b2" stroke-width="2.500"/><circle cx="30" cy="30" r="21.500" fill="none" stroke="#a8a8a8" stroke-width="3.500" stroke-dasharray="2.200 2.300"/><circle cx="30" cy="30" r="18" fill="#3c3c3c" stroke="#b0b0b0" stroke-width="3.500"/><path d="M30 30h16M30 30l-8-14M30 30l-8 14" stroke="#b8b8b8" stroke-width="3.500"/></svg>
    <div class="ml-[20px] pt-[12px] leading-7"><p class="text-[24px] leading-[34px] mb-[3px] font-semibold"><span data-w="251">Updates Not Installed</span></p><p><span data-w="383">Some updates could not be installed</span></p><p><span data-w="146">automatically.</span></p></div>
    <div class="ml-auto w-[141px] shrink-0 border-l-2 border-[#3f6466] flex flex-col text-[24px] text-[#97b6b6] font-normal leading-none">
      <div class="flex-1 flex items-center justify-center border-b-2 border-[#3f6466] pt-[3px] pl-[2px]"><span data-w="81">Details</span></div>
      <div class="flex-1 flex items-center justify-center pt-[4px] pl-[2px]"><span data-w="71">Install</span></div>
    </div>
  </div>
</aside>

<script>
// Fit labels to their design widths through letter spacing; refit whenever
// a label's box changes (stylesheet or font arriving late).
function fit(el) {
  const target = +el.dataset.w;
  if (Math.abs(el.getBoundingClientRect().width - target) < 0.3) return;
  el.style.letterSpacing = '0px';
  const natural = el.getBoundingClientRect().width;
  el.style.letterSpacing = ((target - natural) / el.textContent.length) + 'px';
}
const labels = document.querySelectorAll('[data-w]');
const watcher = new ResizeObserver(entries => entries.forEach(e => fit(e.target)));
labels.forEach(el => { el.style.display = 'inline-block'; el.style.flexShrink = 0; watcher.observe(el); });
window.addEventListener('load', () => labels.forEach(fit));

const SANS = 'Inter, sans-serif', AXIS = "'Liberation Sans', Arial, sans-serif";
function label(x, y, s, size, w, opt = {}) {
  return `<text x="${x}" y="${y}" font-size="${size}" font-family="${opt.font || SANS}" font-weight="${opt.weight || 400}" fill="${opt.fill || '#eee'}" text-anchor="${opt.anchor || 'middle'}" ${w ? `textLength="${w}" lengthAdjust="spacingAndGlyphs"` : ''}>${s}</text>`;
}
function axisWidth(s) {
  let em = 0;
  for (const c of s) em += c === '-' ? 0.333 : (c === '.' || c === ':') ? 0.278 : 0.556;
  return em * 24;
}
function frame(x, y, body) {
  return `<svg class="block w-[636px] h-[432px]" viewBox="${x} ${y} 636 432">${body}</svg>`;
}
let seed = 7;
const rnd = () => (seed = (seed * 16807) % 2147483647) / 2147483647;
function noise(x0, x1, lo, hi, bias) {
  const pts = [];
  for (let x = x0; x <= x1; x += 1.4) pts.push([x.toFixed(1), rnd() < bias ? hi : lo]);
  return pts;
}

const charts = {
  messageId: { left: 632, top: 418, title: 'MessageID', tw: 195, gx: [723, 947, 1207], xl: ['23:58:00', '00:28:00', '01:03:00'],
    gy: [534, 592.5, 652, 710, 769], yl: ['500', '375', '250', '125', '-0'], lx: 701, rx: 1258,
    line: [...noise(723, 920, 767, 764, .4), [975, 767], [982, 763], [988, 767], [995, 765], [1005, 759], [1020, 750], [1032, 742], [1042, 736], [1047, 730], [1049, 734], [1050, 766], [1056, 766], [1066, 759], [1069, 767], [1084, 765], [1094, 757], [1098, 766], [1108, 763], [1125, 753], [1140, 744], [1155, 733], [1167, 726], [1185, 717], [1204, 706]] },
  temperature: { left: 1280, top: 418, title: 'Temperature in C', tw: 305, gx: [1387, 1617, 1855], xl: ['00:02:00', '00:32:00', '01:03:00'],
    gy: [533.5, 556.5, 616, 675, 734.5, 768.5], yl: ['30', '25', '12.5', '0', '-12.5', '-20'], lx: 1366, rx: 1906,
    line: [[1394, 560], [1556, 560], [1562, 673], [1616, 560], [1639, 560], [1640, 616], [1642, 560], [1647, 560], [1648, 616], [1649, 560], [1852, 560]] },
  humidity: { left: 1280, top: 850, title: 'Humidity', tw: 158, gx: [1371, 1609, 1855], xl: ['00:02:00', '00:32:00', '01:03:00'],
    gy: [965.5, 1025, 1084, 1141, 1201], yl: ['100', '75', '50', '25', '0'], lx: 1350, rx: 1906,
    line: [...noise(1377, 1543, 1069, 1063, .55), [1546, 1070], [1552, 1197], [1607, 1062], [1614, 1059], ...noise(1617, 1630, 1067, 1062, .5), [1632, 1066], [1632, 945], [1633, 1066], [1639, 1066], [1640, 945], [1641, 1061], ...noise(1643, 1690, 1065, 1061, .8), ...noise(1691, 1745, 1068, 1061, .55), ...noise(1747, 1800, 1069, 1063, .5), [1803, 1066], [1812, 1060], [1828, 1061], [1836, 1069], [1842, 1065], [1852, 1063], [1853, 1068]] },
  soil: { left: 1280, top: 1282, title: 'Soil Moisture 1=None', tw: 376, gx: [1373.5, 1566, 1853.5], xl: ['00:58:00', '01:00:00', '01:03:00'],
    gy: [1397.5, 1457, 1516, 1573.5, 1633], yl: ['1', '0.5', '0', '-0.5', '-1'], lx: 1352, rx: 1906,
    line: [[1395, 1396], [1845, 1396]] },
  outdoor: { left: 2576, top: 418, title: 'Outdoor Temperature in C', tw: 461, gx: [2683, 2809, 2935, 3151], xl: ['00:22:00', '00:32:00', '00:42:00', '00:59:00'],
    gy: [533.5, 557, 615.5, 675, 734.5, 768.5], yl: ['30', '25', '12.5', '0', '-12.5', '-20'], lx: 2662, rx: 3202,
    line: [[2690, 562], [2710, 562], [2720, 673], [2809, 562], [3084, 562]] }
};
const tooltip = `<path d="M1258 628H778q-8 0-8 8v76q0 8 8 8h254l10 11 10-11h206z" fill="#000" fill-opacity=".8"/>`
  + label(782, 664, '00:40:55', 26, 94, { font: AXIS, weight: 700, fill: '#fff', anchor: 'start' })
  + label(782, 701, 'iot-2/type/playbulb/id/playbulb30/evt/random/fmt/jso', 23.5, 475, { font: AXIS, fill: '#fff', anchor: 'start' });

document.querySelectorAll('[data-chart]').forEach(el => {
  const c = charts[el.dataset.chart], last = c.gy.length - 1;
  let s = label(c.left + 318, c.top + 74, c.title, 35.5, c.tw);
  c.gy.forEach((y, i) => {
    s += `<path d="M${c.lx + 1} ${y}H${c.rx}" stroke="#fff" stroke-opacity="${i === last ? .18 : .1}" stroke-width="2"/>`;
    s += label(c.lx, y + 7, c.yl[i], 27.5, axisWidth(c.yl[i]), { font: AXIS, anchor: 'end', fill: '#e6e6e6' });
  });
  c.gx.forEach((x, i) => {
    s += `<path d="M${x} ${c.top + 101}V${c.top + 372.5}" stroke="#fff" stroke-opacity="${i === 0 ? .18 : .1}" stroke-width="2"/>`;
    s += label(x - .8, c.top + 394.5, c.xl[i], 27.5, 94.5, { font: AXIS, fill: '#e6e6e6' });
  });
  s += `<clipPath id="p${el.dataset.chart}"><path d="M${c.lx} ${c.top + 101}H${c.rx}V${c.top + 380}H${c.lx}z"/></clipPath>`;
  s += `<polyline clip-path="url(#p${el.dataset.chart})" points="${c.line.map(p => p.join()).join(' ')}" fill="none" stroke="#1f77b4" stroke-width="4.400" stroke-linejoin="round"/>`;
  if (el.dataset.chart === 'messageId') s += '<circle cx="1042" cy="737" r="8.500" fill="#1f77b4"/>' + tooltip;
  el.innerHTML = frame(c.left, c.top, s);
});

const gauges = {
  messageId: { left: 632, top: 850, cx: 950, title: 'Current MsgID', tw: 258, v: '132', vw: 102, f: .132, min: '0', max: '1000', unit: 'MessageID', uw: 117, col: ['#38bd00', '#3ec400', '#37b604'] },
  humidity: { left: 1928, top: 418, cx: 2246, title: 'Humidity', tw: 158, v: '55', vw: 73, f: .55, min: '0', max: '100', unit: 'units', uw: 49, col: ['#e0d200', '#e4d412', '#d3c600'] },
  temperature: { left: 1928, top: 850, cx: 2246, title: 'Temperatur', tw: 204, v: '24', vw: 73, f: .7714, min: '-30', max: '40', unit: 'units', uw: 49, col: ['#d38614', '#d5891c', '#c67d18'] },
  moisture: { left: 1928, top: 1282, cx: 2246, title: 'Moisture 1=Dry', tw: 269, v: '1', vw: 27, f: 1, min: '-1', max: '1', unit: 'units', uw: 49, col: ['#c73333', '#ca3838', '#bb3131'] },
  outdoor: { left: 2576, top: 850, cx: 2894, title: 'Outdoor Temperatur', tw: 361, v: '23.812', vw: 193, f: .7687, min: '-30', max: '40', unit: 'units', uw: 49, col: ['#d38614', '#d5891c', '#c67d18'] }
};
function arc(cx, cy, f0, f1, fill) {
  const p = (f, r) => `${cx - r * Math.cos(Math.PI * f)} ${cy - r * Math.sin(Math.PI * f)}`;
  return `<path d="M${p(f0, 192)}A192 192 0 0 1 ${p(f1, 192)}L${p(f1, 120)}A120 120 0 0 0 ${p(f0, 120)}z" fill="${fill}"/>`;
}
document.querySelectorAll('[data-gauge]').forEach(el => {
  const g = gauges[el.dataset.gauge], cy = g.top + 348, id = 'g' + el.dataset.gauge;
  const nw = t => [...t].reduce((a, c) => a + (c === '-' ? 8 : 14), 0);
  let s = `<radialGradient id="${id}" gradientUnits="userSpaceOnUse" cx="${g.cx}" cy="${cy}" r="192"><stop offset=".62" stop-color="${g.col[0]}"/><stop offset=".8" stop-color="${g.col[1]}"/><stop offset=".9" stop-color="${g.col[0]}"/><stop offset="1" stop-color="${g.col[2]}"/></radialGradient>`;
  s += label(g.cx, g.top + 81, g.title, 35.5, g.tw);
  s += arc(g.cx, cy, 0, 1, '#555') + arc(g.cx, cy, 0, g.f, `url(#${id})`);
  s += label(g.cx, cy - 6, g.v, 58, g.vw, { weight: 700 });
  s += `<path transform="rotate(${g.f * 180} ${g.cx} ${cy})" d="M${g.cx - 88} ${cy - 5}L${g.cx - 208} ${cy}L${g.cx - 88} ${cy + 5}z" fill="#eee"/>`;
  s += label(g.cx - 156.5, cy + 37, g.min, 23.5, nw(g.min) - (g.min.endsWith('1') ? 3 : 0)) + label(g.cx + 156.5, cy + 37, g.max, 23.5, g.max === '1' ? 0 : nw(g.max)) + label(g.cx, cy + 45, g.unit, 22, g.uw);
  el.innerHTML = frame(g.left, g.top, s);
});
</script>
</body>
</html>
